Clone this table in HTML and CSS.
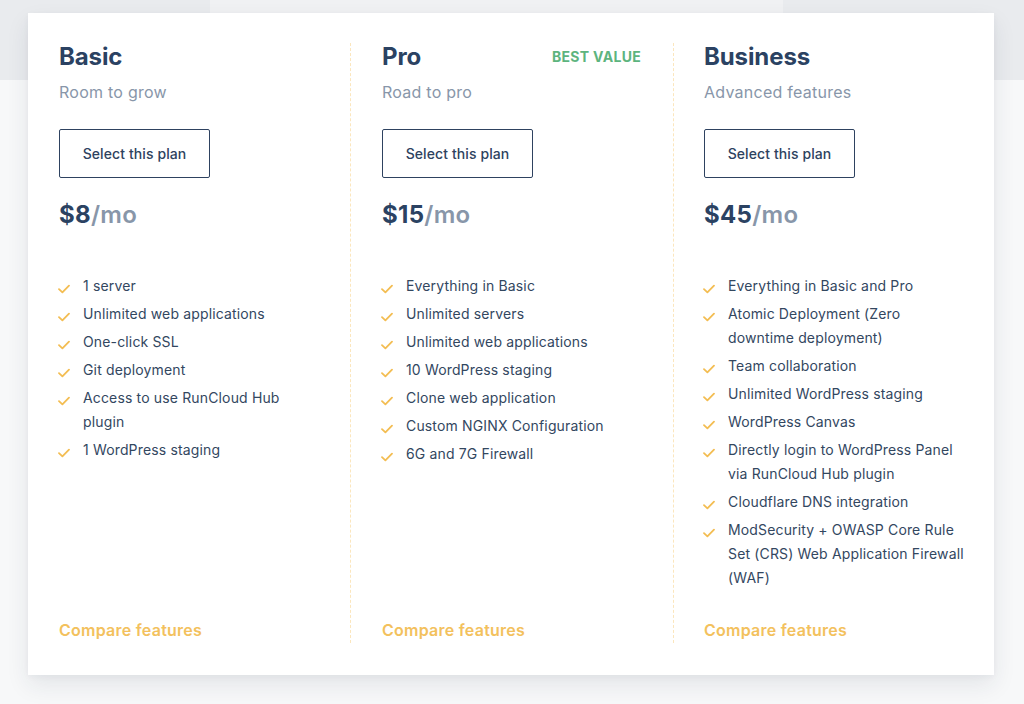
FILE: index.html
```html
<!DOCTYPE html>
<html lang="en">
<head>
<meta charset="utf-8">
<title>Pricing plans</title>
<link rel="stylesheet" href="styles.css">
</head>
<body>
<div class="page">
  <div class="card">
    <section class="plan">
      <div class="plan-head">
        <h2 class="plan-name">Basic</h2>
      </div>
      <p class="plan-tag">Room to grow</p>
      <button class="select-btn">Select this plan</button>
      <p class="price"><span class="amount">$8</span><span class="per">/mo</span></p>
      <ul class="features">
        <li><svg class="check" viewBox="0 0 12 10"><path d="M1 5.2 L4.4 8.4 L11 1.6"/></svg><span>1 server</span></li>
        <li><svg class="check" viewBox="0 0 12 10"><path d="M1 5.2 L4.4 8.4 L11 1.6"/></svg><span>Unlimited web applications</span></li>
        <li><svg class="check" viewBox="0 0 12 10"><path d="M1 5.2 L4.4 8.4 L11 1.6"/></svg><span>One-click SSL</span></li>
        <li><svg class="check" viewBox="0 0 12 10"><path d="M1 5.2 L4.4 8.4 L11 1.6"/></svg><span>Git deployment</span></li>
        <li><svg class="check" viewBox="0 0 12 10"><path d="M1 5.2 L4.4 8.4 L11 1.6"/></svg><span>Access to use RunCloud Hub plugin</span></li>
        <li><svg class="check" viewBox="0 0 12 10"><path d="M1 5.2 L4.4 8.4 L11 1.6"/></svg><span>1 WordPress staging</span></li>
      </ul>
      <a class="compare" href="#">Compare features</a>
    </section>
    <section class="plan">
      <div class="plan-head">
        <h2 class="plan-name">Pro</h2>
        <span class="badge">BEST VALUE</span>
      </div>
      <p class="plan-tag">Road to pro</p>
      <button class="select-btn">Select this plan</button>
      <p class="price"><span class="amount">$15</span><span class="per">/mo</span></p>
      <ul class="features">
        <li><svg class="check" viewBox="0 0 12 10"><path d="M1 5.2 L4.4 8.4 L11 1.6"/></svg><span>Everything in Basic</span></li>
        <li><svg class="check" viewBox="0 0 12 10"><path d="M1 5.2 L4.4 8.4 L11 1.6"/></svg><span>Unlimited servers</span></li>
        <li><svg class="check" viewBox="0 0 12 10"><path d="M1 5.2 L4.4 8.4 L11 1.6"/></svg><span>Unlimited web applications</span></li>
        <li><svg class="check" viewBox="0 0 12 10"><path d="M1 5.2 L4.4 8.4 L11 1.6"/></svg><span>10 WordPress staging</span></li>
        <li><svg class="check" viewBox="0 0 12 10"><path d="M1 5.2 L4.4 8.4 L11 1.6"/></svg><span>Clone web application</span></li>
        <li><svg class="check" viewBox="0 0 12 10"><path d="M1 5.2 L4.4 8.4 L11 1.6"/></svg><span>Custom NGINX Configuration</span></li>
        <li><svg class="check" viewBox="0 0 12 10"><path d="M1 5.2 L4.4 8.4 L11 1.6"/></svg><span>6G and 7G Firewall</span></li>
      </ul>
      <a class="compare" href="#">Compare features</a>
    </section>
    <section class="plan">
      <div class="plan-head">
        <h2 class="plan-name">Business</h2>
      </div>
      <p class="plan-tag">Advanced features</p>
      <button class="select-btn">Select this plan</button>
      <p class="price"><span class="amount">$45</span><span class="per">/mo</span></p>
      <ul class="features">
        <li><svg class="check" viewBox="0 0 12 10"><path d="M1 5.2 L4.4 8.4 L11 1.6"/></svg><span>Everything in Basic and Pro</span></li>
        <li><svg class="check" viewBox="0 0 12 10"><path d="M1 5.2 L4.4 8.4 L11 1.6"/></svg><span>Atomic Deployment (Zero downtime deployment)</span></li>
        <li><svg class="check" viewBox="0 0 12 10"><path d="M1 5.2 L4.4 8.4 L11 1.6"/></svg><span>Team collaboration</span></li>
        <li><svg class="check" viewBox="0 0 12 10"><path d="M1 5.2 L4.4 8.4 L11 1.6"/></svg><span>Unlimited WordPress staging</span></li>
        <li><svg class="check" viewBox="0 0 12 10"><path d="M1 5.2 L4.4 8.4 L11 1.6"/></svg><span>WordPress Canvas</span></li>
        <li><svg class="check" viewBox="0 0 12 10"><path d="M1 5.2 L4.4 8.4 L11 1.6"/></svg><span>Directly login to WordPress Panel via RunCloud Hub plugin</span></li>
        <li><svg class="check" viewBox="0 0 12 10"><path d="M1 5.2 L4.4 8.4 L11 1.6"/></svg><span>Cloudflare DNS integration</span></li>
        <li><svg class="check" viewBox="0 0 12 10"><path d="M1 5.2 L4.4 8.4 L11 1.6"/></svg><span>ModSecurity + OWASP Core Rule Set (CRS) Web Application Firewall (WAF)</span></li>
      </ul>
      <a class="compare" href="#">Compare features</a>
    </section>
  </div>
</div>
</body>
</html>
```

FILE: styles.css
```css
* { box-sizing: border-box; }

html, body {
  margin: 0;
  padding: 0;
  height: 704px;
  overflow: hidden;
}

body {
  font-family: Inter, "Open Sans", "Liberation Sans", sans-serif;
  color: #33475f;
  background:
    linear-gradient(to right, #e9ebee 0, #e9ebee 210px, #f0f1f3 210px, #f0f1f3 783px, #e9ebee 783px) top / 100% 80px no-repeat,
    #f7f8f9;
}

.page {
  padding: 13px 30px 0 28px;
}

.card {
  width: 966px;
  height: 662px;
  background: #ffffff;
  display: grid;
  grid-template-columns: 322px 323px 321px;
  padding: 30px 0 32px;
  box-shadow: 0 10px 22px rgba(30, 45, 70, 0.09), 0 2px 6px rgba(30, 45, 70, 0.04);
}

.plan {
  display: flex;
  flex-direction: column;
  padding: 0 32px 0 31px;
}

.plan + .plan {
  border-left: 1px dashed #fbe6bd;
}

.plan:nth-child(3) { padding-left: 30px; padding-right: 28px; }

.plan-head {
  display: flex;
  justify-content: space-between;
  align-items: center;
  height: 30px;
  margin-top: -1px;
}

.plan-name {
  margin: 0;
  font-size: 24px;
  line-height: 30px;
  font-weight: 700;
  color: #2b4262;
  letter-spacing: -0.1px;
}

.badge {
  font-size: 14px;
  line-height: 20px;
  font-weight: 700;
  color: #5db47e;
  letter-spacing: 0.3px;
  margin-top: -1px;
}

.plan-tag {
  margin: 8px 0 0;
  font-size: 16px;
  line-height: 24px;
  color: #8896a9;
  letter-spacing: 0.25px;
}

.select-btn {
  margin-top: 25px;
  width: 151px;
  height: 49px;
  background: #fff;
  border: 1px solid #2e4260;
  border-radius: 2px;
  font-family: inherit;
  font-size: 14px;
  font-weight: 500;
  color: #2e4260;
  padding: 0;
  letter-spacing: 0.1px;
  cursor: pointer;
}

.price {
  margin: 22px 0 0;
  font-size: 24px;
  line-height: 30px;
  font-weight: 700;
  letter-spacing: 0.3px;
}

.amount { color: #2b4262; }
.per { color: #8896a9; font-weight: 600; }

.features {
  list-style: none;
  margin: 44px 0 0;
  padding: 0;
  display: flex;
  flex-direction: column;
  gap: 4px;
}

.features li {
  display: flex;
  align-items: flex-start;
  font-size: 14px;
  line-height: 24px;
  color: #33475f;
  letter-spacing: 0.15px;
}

.check {
  flex: none;
  width: 12px;
  height: 10px;
  margin: 10px 13px 0 -1px;
  fill: none;
  stroke: #f3bd52;
  stroke-width: 1.8;
  stroke-linecap: round;
  stroke-linejoin: round;
}

.compare {
  margin-top: auto;
  margin-bottom: 1px;
  font-size: 16px;
  line-height: 24px;
  font-weight: 600;
  color: #f3c15d;
  text-decoration: none;
  letter-spacing: 0.25px;
}
```
